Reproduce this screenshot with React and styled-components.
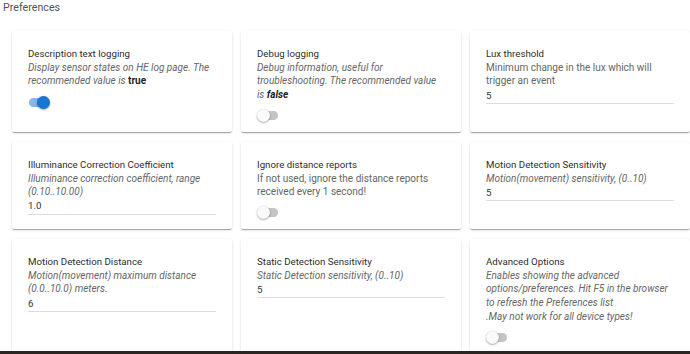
import styled, { createGlobalStyle } from 'styled-components'

const GlobalStyle = createGlobalStyle`
  html, body {
    margin: 0;
    padding: 0;
    background: #fff;
    font-family: Roboto, "Noto Sans", Arial, sans-serif;
  }
`

const StrongText = styled.b`
  font-weight: 700;
  color: #222;
  font-style: ${(p) => (p.$upright ? 'normal' : 'italic')};
`

const prefs = [
  {
    title: 'Description text logging',
    desc: (
      <>
        Display sensor states on HE log page. The recommended value is{' '}
        <StrongText $upright>true</StrongText>
      </>
    ),
    italic: true,
    toggle: true,
  },
  {
    title: 'Debug logging',
    desc: (
      <>
        Debug information, useful for troubleshooting. The recommended value
        is <StrongText>false</StrongText>
      </>
    ),
    italic: true,
    toggle: false,
  },
  {
    title: 'Lux threshold',
    desc: 'Minimum change in the lux which will trigger an event',
    value: '5',
  },
  {
    title: 'Illuminance Correction Coefficient',
    desc: 'Illuminance correction coefficient, range (0.10..10.00)',
    italic: true,
    value: '1.0',
  },
  {
    title: 'Ignore distance reports',
    desc: 'If not used, ignore the distance reports received every 1 second!',
    toggle: false,
  },
  {
    title: 'Motion Detection Sensitivity',
    desc: 'Motion(movement) sensitivity, (0..10)',
    italic: true,
    value: '5',
  },
  {
    title: 'Motion Detection Distance',
    desc: 'Motion(movement) maximum distance (0.0..10.0) meters.',
    italic: true,
    value: '6',
  },
  {
    title: 'Static Detection Sensitivity',
    desc: 'Static Detection sensitivity, (0..10)',
    italic: true,
    value: '5',
  },
  {
    title: 'Advanced Options',
    desc: (
      <>
        Enables showing the advanced options/preferences. Hit F5 in the browser
        to refresh the Preferences list
        <br />
        .May not work for all device types!
      </>
    ),
    italic: true,
    toggle: false,
  },
]

const Page = styled.div`
  height: 354px;
  display: flex;
  flex-direction: column;
`

const Main = styled.div`
  height: 351px;
  overflow: hidden;
`

const Heading = styled.div`
  padding-left: 3px;
  font-size: 10.7px;
  line-height: 16px;
  color: #555;
`

const Grid = styled.div`
  display: grid;
  grid-template-columns: repeat(3, 220px);
  column-gap: 9px;
  row-gap: 10px;
  padding: 15px 0 0 12px;
`

const Card = styled.div`
  display: flex;
  flex-direction: column;
  padding: 16px 16px 8px;
  background: #fff;
  box-shadow: 0 2px 1px -1px rgba(0, 0, 0, 0.2), 0 1px 1px 0 rgba(0, 0, 0, 0.14),
    0 1px 3px 0 rgba(0, 0, 0, 0.12);
  border-radius: 2px;
`

const Title = styled.div`
  font-size: 9.7px;
  line-height: 13.7px;
  color: #2e2e2e;
`

const Desc = styled.div`
  font-size: 10px;
  line-height: 13.7px;
  color: #666;
  font-style: ${(p) => (p.$italic ? 'italic' : 'normal')};
`

const Input = styled.input`
  display: block;
  box-sizing: border-box;
  width: 100%;
  height: 16px;
  margin: 0;
  padding: 0 0 1px;
  border: 0;
  border-bottom: 1px solid #dcdcdc;
  outline: none;
  background: transparent;
  font-family: inherit;
  font-size: 9.7px;
  color: #333;
`

const Switch = styled.div`
  position: relative;
  width: 22px;
  height: 16px;
  margin-top: 6px;
`

const Track = styled.span`
  position: absolute;
  left: 1px;
  top: 3.5px;
  width: 20px;
  height: 9px;
  border-radius: 5px;
  background: ${(p) => (p.$on ? '#86b5e8' : '#c4c4c4')};
`

const Thumb = styled.span`
  position: absolute;
  top: 1.5px;
  left: ${(p) => (p.$on ? '9px' : '0')};
  width: 13px;
  height: 13px;
  border-radius: 50%;
  background: ${(p) => (p.$on ? '#1976d2' : '#fafafa')};
  box-shadow: 0 1px 2px rgba(0, 0, 0, 0.3), 0 0 1px rgba(0, 0, 0, 0.2);
`

const BottomBar = styled.div`
  height: 3px;
  background: #2c2622;
`

function Toggle({ on }) {
  return (
    <Switch>
      <Track $on={on} />
      <Thumb $on={on} />
    </Switch>
  )
}

function PrefCard({ title, desc, italic, toggle, value }) {
  return (
    <Card>
      <Title>{title}</Title>
      <Desc $italic={italic}>{desc}</Desc>
      {value !== undefined && <Input readOnly defaultValue={value} />}
      {toggle !== undefined && <Toggle on={toggle} />}
    </Card>
  )
}

export default function App() {
  return (
    <Page>
      <GlobalStyle />
      <Main>
        <Heading>Preferences</Heading>
        <Grid>
          {prefs.map((p) => (
            <PrefCard key={p.title} {...p} />
          ))}
        </Grid>
      </Main>
      <BottomBar />
    </Page>
  )
}
